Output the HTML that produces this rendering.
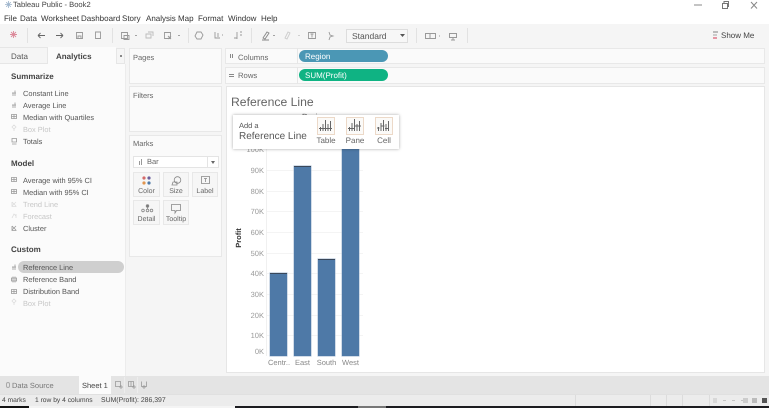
<!DOCTYPE html>
<html><head><meta charset="utf-8">
<style>
html,body{margin:0;padding:0;background:#fff}
#w{position:absolute;left:0;top:0;width:769px;height:408px;overflow:hidden;background:#fff;font-family:"Liberation Sans",sans-serif;color:#555;font-size:7.5px;text-rendering:geometricPrecision;filter:blur(.3px)}
#w div{position:absolute;white-space:nowrap}
svg{position:absolute;overflow:visible}
.box{background:#fafafa;border:1px solid #e8e8e8;box-sizing:border-box}
.h{font-size:8px;font-weight:bold;color:#444;line-height:10px;left:11px;margin-top:.5px}
.i{left:23px;font-size:7.4px;color:#555;line-height:12px;margin-top:.7px}
.d{color:#c6c6c6}
.y{width:30px;left:234px;text-align:right;font-size:7.5px;color:#999;line-height:10px;margin-top:.5px}
.x{font-size:7.5px;color:#888;line-height:10px;text-align:center;top:358px}
.b{background:#4e79a7;width:17.500px;bottom:52px;box-shadow:0 0 0 .5px #a4bad2}
.g{left:267px;width:96px;height:1px;background:#f4f4f4}
.m{background:#f6f6f6;border:1px solid #e8e8e8;box-sizing:border-box;width:27px;height:25px;font-size:7px;color:#666;text-align:center}
.m span{position:absolute;left:0;right:0;bottom:1px}
.mn{top:14px;font-size:8px;color:#333;line-height:10px}
.pi{border:1px solid #ecd9c8;box-sizing:border-box;width:18px;height:18px;top:117px;background:#fbfaf8}
.pl{font-size:8px;color:#666;top:136px;line-height:10px;text-align:center}
.sep{width:1px;height:15px;top:28px;background:#e2e2e2}
</style></head><body><div id="w">
<!-- title bar -->
<svg style="left:5px;top:1px" width="7" height="7" viewBox="0 0 7 7"><path d="M3.500 0V7M0 3.500H7M1.200 1.200L5.800 5.800M5.800 1.200L1.200 5.800" stroke="#9db4cc" stroke-width=".8"/></svg>
<div style="left:13px;top:0;font-size:7.600px;line-height:10px;color:#444">Tableau Public - Book2</div>
<svg style="left:690px;top:0" width="79" height="10" fill="none"><path d="M4 5H12" stroke="#888"/><path d="M32.500 3.500H37.500V8.500H32.500ZM34 3.500V1.500H38.500V6.500H37.500" stroke="#777"/><path d="M61 2L67 8.500M67 2L61 8.500" stroke="#888"/></svg>
<div class="mn" style="left:4px">File</div><div class="mn" style="left:20px">Data</div><div class="mn" style="left:41px">Worksheet</div><div class="mn" style="left:81px">Dashboard</div><div class="mn" style="left:122px">Story</div><div class="mn" style="left:146px">Analysis</div><div class="mn" style="left:178px">Map</div><div class="mn" style="left:198px">Format</div><div class="mn" style="left:228px">Window</div><div class="mn" style="left:261px">Help</div>
<!-- toolbar -->
<div style="left:0;top:24px;width:769px;height:22px;background:#f5f5f5"></div>
<svg style="left:0;top:24px" width="340" height="22" fill="none" stroke="#999" stroke-width=".9">
<path d="M11 8L16 13M16 8L11 13M13.500 7V14M10 10.500H17" stroke="#dc8a9a"/>
<path d="M38 11.500H45M38 11.500L40.500 9M38 11.500L40.500 14M56 11.500H63M63 11.500L60.500 9M63 11.500L60.500 14" stroke="#666"/>
<path d="M76.500 8.500H82.500V14.500H76.500ZM78 14.500V12H81V14.500M95.500 8V14.500H100.500V8Z"/>
<path d="M121.500 8.500H127.500V14.500H121.500ZM124 11.500H129V15.500H124Z"/><path d="M135 11.500H137"/>
<path d="M146 10H151V14H146ZM148 8H153V12" stroke="#bbb"/>
<path d="M164.500 8.500H170.500V14.500H164.500ZM168 12L171 15M171 12L168 15"/><path d="M178 11.500H180"/>
<path d="M197 8H201L203 11L201 15H197L195 12Z"/><path d="M215 8V14H220M218 9V13M222 11H223M237 8V15M240 8H242M240 11H242M234 14H237"/>
<path d="M263 14L267 8L269 9L265 15ZM262 16H269" stroke="#888"/><path d="M273 11.500H275"/>
<path d="M285 14L288 8L290 9L287 15Z" stroke="#ccc"/><path d="M298 11.500H300" stroke="#ccc"/>
<path d="M308.500 8.500H315.500V14.500H308.500ZM312 10V13.500M310.500 10H313.500"/>
<path d="M329 8L330 11L333 12L330 13L329 16"/>
</svg>
<div class="sep" style="left:27px"></div><div class="sep" style="left:112px"></div><div class="sep" style="left:188px"></div><div class="sep" style="left:251px"></div><div class="sep" style="left:416px"></div><div class="sep" style="left:467px"></div>
<div style="left:346px;top:29px;width:62px;height:14px;box-sizing:border-box;border:1px solid #ddd;background:#f7f7f7;font-size:8.500px;line-height:13px;padding-left:5px;color:#555">Standard</div>
<svg style="left:400px;top:34px" width="6" height="4"><path d="M0 0H5L2.500 3Z" fill="#555"/></svg>
<svg style="left:424px;top:30px" width="40" height="12" fill="none" stroke="#999"><path d="M1.500 3.500H11.500V8.500H1.500ZM6 3.500V8.500"/><path d="M15 6H16"/><path d="M25.500 3.500H32.500V7.500H25.500ZM29 7.500V10M27 10H31"/></svg>
<div style="left:713px;top:31px;width:5px;height:2px;background:#bbb"></div><div style="left:713px;top:34px;width:4px;height:2px;background:#ccc"></div><div style="left:713px;top:37px;width:4px;height:2px;background:#e596a4"></div>
<div style="left:721px;top:30px;font-size:8px;line-height:11px;color:#444">Show Me</div>
<!-- left panel -->
<div style="left:0;top:46px;width:769px;height:330px;background:#f5f5f5"></div>
<div style="left:0;top:64px;width:125px;height:312px;background:#fbfbfb;border-right:1px solid #ececec"></div>
<div style="left:0;top:47px;width:48px;height:17px;background:#f5f5f5;border:solid #e6e6e6;border-width:1px 1px 1px 0;box-sizing:border-box"></div>
<div style="left:48px;top:47px;width:68px;height:18px;background:#fbfbfb"></div>
<div style="left:116px;top:48px;width:9px;height:16px;background:#f5f5f5;border:1px solid #e6e6e6;box-sizing:border-box"></div>
<div style="left:120px;top:55px;width:2px;height:2px;background:#888"></div>
<div style="left:11px;top:51px;font-size:8px;line-height:11px;color:#555">Data</div>
<div style="left:56px;top:51px;font-size:8px;line-height:11px;color:#444;font-weight:bold">Analytics</div>

<div class="h" style="top:71px">Summarize</div>
<div class="i" style="top:87px">Constant Line</div>
<div class="i" style="top:99px">Average Line</div>
<div class="i" style="top:111px">Median with Quartiles</div>
<div class="i d" style="top:123px">Box Plot</div>
<div class="i" style="top:135px">Totals</div>
<div class="h" style="top:158px">Model</div>
<div class="i" style="top:174px">Average with 95% CI</div>
<div class="i" style="top:186px">Median with 95% CI</div>
<div class="i d" style="top:198px">Trend Line</div>
<div class="i d" style="top:210px">Forecast</div>
<div class="i" style="top:222px">Cluster</div>
<div class="h" style="top:244px">Custom</div>
<div style="left:18px;top:261px;width:106px;height:12px;border-radius:6px;background:#cfcfcf"></div>
<div class="i" style="top:261px">Reference Line</div>
<div class="i" style="top:273px">Reference Band</div>
<div class="i" style="top:285px">Distribution Band</div>
<div class="i d" style="top:297px">Box Plot</div>
<!-- analytics icons -->
<svg style="left:0;top:0" width="20" height="310" fill="none" stroke="#999" stroke-width=".8">
<path d="M13 96V92.500M15 96V90.500M12 93H16M13 108V104.500M15 108V102.500M12 105H16"/>
<path d="M11.500 114.500H16.500V118.500H11.500ZM11.500 116.500H16.500M14 114.500V118.500"/>
<path d="M14 125L16 127L14 129L12 127ZM14 129V131" stroke="#ddd"/>
<path d="M12 138.500H16.500V142H12ZM12 144H16.500"/>
<path d="M11.500 177.500H16.500V181.500H11.500ZM11.500 179.500H16.500M14 177.500V181.500M11.500 189.500H16.500V193.500H11.500ZM11.500 191.500H16.500M14 189.500V193.500"/>
<path d="M12 202L16 206M12 206L16 202M12 202V206.500H16.500" stroke="#ddd"/>
<path d="M12 218L14 214L16 216M16 214V218" stroke="#ddd"/>
<path d="M12 226L16 230M12 230L16 226M12 226V230.500H16.500"/>
<path d="M13 270V266.500M15 270V264.500M12 267H16"/>
<path d="M11.500 278H16.500V281H11.500ZM13 276.500V282.500M15 276.500V282.500"/>
<path d="M11.500 289.500H16.500V293.500H11.500ZM11.500 291.500H16.500M14 289.500V293.500"/>
<path d="M14 299L16 301L14 303L12 301ZM14 303V305" stroke="#ddd"/>
</svg>

<!-- cards -->
<div class="box" style="left:129px;top:48px;width:93px;height:36px"></div>
<div style="left:133px;top:52px;line-height:11px;color:#666">Pages</div>
<div class="box" style="left:129px;top:86px;width:93px;height:46px"></div>
<div style="left:133px;top:90px;line-height:11px;color:#666">Filters</div>
<div class="box" style="left:129px;top:135px;width:93px;height:122px"></div>
<div style="left:133px;top:138px;line-height:12px;color:#666">Marks</div>
<div style="left:133px;top:156px;width:86px;height:12px;background:#fff;border:1px solid #e4e4e4;box-sizing:border-box;font-size:7.500px;line-height:10px;color:#666;padding-left:13px">Bar</div>
<div style="left:139px;top:161px;width:1px;height:4px;background:#999"></div><div style="left:141px;top:159px;width:1px;height:6px;background:#999"></div>
<div style="left:207px;top:156px;width:1px;height:12px;background:#e4e4e4"></div>
<svg style="left:211px;top:161px" width="5" height="3"><path d="M0 0H4L2 3Z" fill="#666"/></svg>
<div class="m" style="left:133px;top:172px"><span>Color</span><svg style="left:8px;top:3px" width="9" height="9"><circle cx="2" cy="2" r="1.600" fill="#d46a6a"/><circle cx="7" cy="2" r="1.600" fill="#6a5f9c"/><circle cx="2" cy="7" r="1.600" fill="#e0954f"/><circle cx="7" cy="7" r="1.600" fill="#4e79a7"/></svg></div>
<div class="m" style="left:163px;top:172px;width:26px"><span>Size</span><svg style="left:7px;top:3px" width="11" height="10" fill="none" stroke="#888" stroke-width=".8"><circle cx="6.500" cy="4" r="3.300"/><path d="M2 6H6V9H1Z"/></svg></div>
<div class="m" style="left:192px;top:172px;width:26px"><span>Label</span><svg style="left:8px;top:3px" width="10" height="9" fill="none" stroke="#888" stroke-width=".8"><path d="M.5 .5H8.500V7.500H.5ZM3 2.500H6M4.500 2.500V6"/></svg></div>
<div class="m" style="left:133px;top:200px"><span>Detail</span><svg style="left:7px;top:3px" width="13" height="9" fill="none" stroke="#888" stroke-width=".8"><circle cx="2" cy="6.500" r="1.300"/><circle cx="10.500" cy="6.500" r="1.300"/><circle cx="6.500" cy="6.500" r="1.300"/><circle cx="6.500" cy="2" r="1.300" fill="#777"/><path d="M6.500 3V5"/></svg></div>
<div class="m" style="left:163px;top:200px;width:26px"><span>Tooltip</span><svg style="left:7px;top:3px" width="11" height="10" fill="none" stroke="#888" stroke-width=".8"><path d="M.5 .5H9.500V6.500H5.500L4 9V6.500H.5Z"/></svg></div>

<!-- shelves -->
<div class="box" style="left:225px;top:48px;width:540px;height:16px"></div>
<div class="box" style="left:225px;top:67px;width:540px;height:17px"></div>
<div style="left:230px;top:54px;width:1px;height:4px;background:#888;box-shadow:2px 0 0 #888"></div>
<div style="left:238px;top:51.500px;font-size:7.700px;line-height:11px;color:#666">Columns</div>
<div style="left:229px;top:74px;width:5px;height:1px;background:#888;box-shadow:0 2px 0 #888"></div>
<div style="left:238px;top:70px;font-size:7.700px;line-height:11px;color:#666">Rows</div>
<div style="left:297px;top:48px;width:1px;height:16px;background:#e6e6e6"></div>
<div style="left:297px;top:67px;width:1px;height:17px;background:#e6e6e6"></div>
<div style="left:299px;top:50px;width:89px;height:12px;border-radius:6px;background:#4b97b5;color:#fff;font-size:8px;line-height:13.500px;text-indent:6px">Region</div>
<div style="left:299px;top:69px;width:89px;height:12px;border-radius:6px;background:#0fb383;color:#fff;font-size:8px;line-height:13px;text-indent:6px">SUM(Profit)</div>

<!-- view -->
<div style="left:226px;top:86px;width:539px;height:287px;background:#fff;border:1px solid #e6e6e6;box-sizing:border-box"></div>
<div style="left:231px;top:94.500px;font-size:12.200px;line-height:15px;color:#666">Reference Line</div>
<div style="left:302px;top:112px;font-size:7.500px;line-height:9px;color:#444">Region</div>
<div class="g" style="top:170px"></div><div class="g" style="top:191px"></div><div class="g" style="top:211px"></div><div class="g" style="top:232px"></div><div class="g" style="top:253px"></div><div class="g" style="top:273px"></div><div class="g" style="top:294px"></div><div class="g" style="top:315px"></div><div class="g" style="top:335px"></div>
<div style="left:266px;top:148px;width:1px;height:208px;background:#f0f0f0"></div>
<div class="y" style="top:144px">100K</div><div class="y" style="top:165px">90K</div><div class="y" style="top:186px">80K</div><div class="y" style="top:206px">70K</div><div class="y" style="top:227px">60K</div><div class="y" style="top:248px">50K</div><div class="y" style="top:268px">40K</div><div class="y" style="top:289px">30K</div><div class="y" style="top:310px">20K</div><div class="y" style="top:330px">10K</div><div class="y" style="top:346px">0K</div>
<div style="left:238.500px;top:237.500px;transform:translate(-50%,-50%) rotate(-90deg);font-size:7.500px;line-height:10px;color:#333;font-weight:bold">Profit</div>
<div class="b" style="left:269.500px;top:273px;border-top:1px solid #39475a"></div>
<div class="b" style="left:293.500px;top:166px;border-top:1px solid #39475a"></div>
<div class="b" style="left:317.500px;top:259px;border-top:1px solid #39475a"></div>
<div class="b" style="left:341.500px;top:140px"></div>
<div class="x" style="left:266px;width:26px">Centr..</div><div class="x" style="left:290px;width:25px">East</div><div class="x" style="left:314px;width:25px">South</div><div class="x" style="left:338px;width:25px">West</div>

<!-- popover -->
<div style="left:233px;top:115px;width:166px;height:34px;background:#fff;box-shadow:0 0 3px rgba(0,0,0,.35)"></div>
<div style="left:239px;top:120px;font-size:7.500px;line-height:11px;color:#555">Add a</div>
<div style="left:239px;top:130px;font-size:10px;line-height:14px;color:#555">Reference Line</div>
<div class="pi" style="left:317px"></div><div class="pi" style="left:346px"></div><div class="pi" style="left:375px"></div>
<svg style="left:317px;top:117px" width="76" height="19" fill="none" stroke="#666" stroke-width="1">
<path d="M3.500 14V10M6 14V7M8.500 14V3M11 14V7M13.500 14V4M2 11.500H15"/>
<path d="M32.500 14V10M35 14V6M37.500 14V2M40 14V7M42.500 14V4M31 11.500H37M38 9H44"/>
<path d="M61.500 14V10M64 14V6M66.500 14V3M69 14V7M71.500 14V4M60 11H62.500M64.500 9H67.500M68 11.500H72"/>
</svg>
<div class="pl" style="left:313px;width:26px">Table</div><div class="pl" style="left:342px;width:26px">Pane</div><div class="pl" style="left:371px;width:26px">Cell</div>

<!-- tabs / status -->
<div style="left:0;top:376px;width:769px;height:18px;background:#e4e4e4"></div>
<div style="left:0;top:394px;width:769px;height:12px;background:#ececec;border-top:1px solid #e0e0e0;box-sizing:border-box"></div>
<div style="left:0;top:406px;width:769px;height:2px;background:#f4f4f4"></div>
<div style="left:0;top:406px;width:29px;height:2px;background:#111"></div>
<div style="left:235px;top:406px;width:534px;height:2px;background:#1c1c20"></div>
<div style="left:358px;top:406px;width:28px;height:2px;background:#777"></div>
<div style="left:6px;top:382px;width:2px;height:4px;border:1px solid #aaa;border-radius:2px"></div>
<div style="left:12px;top:380px;font-size:7.500px;line-height:11px;color:#777">Data Source</div>
<div style="left:79px;top:376px;width:32px;height:18px;background:#fbfbfb"></div>
<div style="left:82px;top:380px;font-size:7.500px;line-height:11px;color:#444">Sheet 1</div>
<div style="left:124px;top:377px;width:1px;height:16px;background:#ededed"></div><div style="left:137px;top:377px;width:1px;height:16px;background:#ededed"></div>
<svg style="left:115px;top:381px" width="36" height="10" fill="none" stroke="#999" stroke-width=".8"><path d="M.5 .5H5.500V5.500H.5ZM6 4V8M4 6H8"/><path d="M13.500 .5H18.500V5.500H13.500ZM16 .5V5.500M19 4V8M17 6H21"/><path d="M26.500 .5V5.500H31.500V.5M29 4V8M27 6H31"/></svg>
<div style="left:2px;top:395px;font-size:6.700px;line-height:11px;color:#444">4 marks</div>
<div style="left:35px;top:395px;font-size:6.700px;line-height:11px;color:#444">1 row by 4 columns</div>
<div style="left:101px;top:395px;font-size:6.900px;line-height:11px;color:#444">SUM(Profit): 286,397</div>
<div style="left:575px;top:395px;width:1px;height:11px;background:#dcdcdc"></div><div style="left:650px;top:395px;width:1px;height:11px;background:#dcdcdc"></div><div style="left:666px;top:395px;width:1px;height:11px;background:#dcdcdc"></div><div style="left:682px;top:395px;width:1px;height:11px;background:#dcdcdc"></div><div style="left:709px;top:395px;width:1px;height:11px;background:#dcdcdc"></div>
<svg style="left:713px;top:397px" width="56" height="8"><path d="M1 1V6M3 1V6M10 3.500H13M19 3.500H22M28 3.500H31" stroke="#c4c4c4" fill="none"/><rect x="30" y="1" width="5" height="5" fill="#ccc"/><rect x="39" y="1" width="5" height="5" fill="#bbb"/><rect x="49" y="1" width="5" height="5" fill="#555"/></svg>
</div></body></html>
